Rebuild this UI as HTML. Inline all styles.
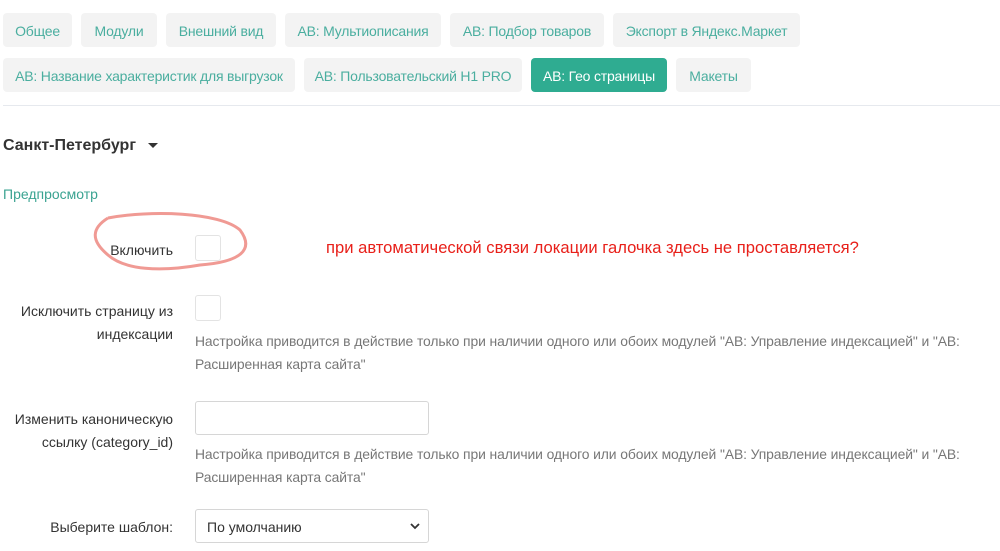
<!DOCTYPE html><html><head><meta charset="utf-8"><style>
body{margin:0;width:1000px;height:551px;background:#fff;font-family:"Liberation Sans","DejaVu Sans",sans-serif;position:relative;overflow:hidden}
.t{position:absolute;height:34px;line-height:36px;background:#f3f3f3;border-radius:4px;color:#4aae9f;font-size:14px;text-align:center;white-space:nowrap;letter-spacing:-0.2px}
.a{background:#2fac91;color:#fff}
.x{position:absolute;white-space:nowrap;font-size:14px;color:#333}
.r{text-align:right;right:827px}
.h{color:#777;left:195px;font-size:13.9px;letter-spacing:-0.1px}
.cb{position:absolute;left:195px;width:26px;height:26px;border:1px solid #e3e3e3;border-radius:3px;box-sizing:border-box}
.in{position:absolute;left:195px;width:234px;height:34px;border:1px solid #d6d6d6;border-radius:3px;box-sizing:border-box}
</style></head><body>
<div class="t" style="left:3px;top:13px;width:69px">Общее</div>
<div class="t" style="left:81px;top:13px;width:76px">Модули</div>
<div class="t" style="left:166px;top:13px;width:110px">Внешний вид</div>
<div class="t" style="left:285px;top:13px;width:156px">АВ: Мультиописания</div>
<div class="t" style="left:450px;top:13px;width:154px">АВ: Подбор товаров</div>
<div class="t" style="left:613px;top:13px;width:187px">Экспорт в Яндекс.Маркет</div>
<div class="t" style="left:3px;top:58px;width:292px">АВ: Название характеристик для выгрузок</div>
<div class="t" style="left:304px;top:58px;width:218px">АВ: Пользовательский H1 PRO</div>
<div class="t a" style="left:531px;top:58px;width:136px">АВ: Гео страницы</div>
<div class="t" style="left:676px;top:58px;width:75px">Макеты</div>
<div style="position:absolute;left:3px;right:0;top:105px;height:1px;background:#e6e9ee"></div>
<div class="x" style="left:3px;top:137px;font-size:16px;font-weight:bold;color:#333">Санкт-Петербург <span style="display:inline-block;margin-left:8px;vertical-align:middle;border-left:5px solid transparent;border-right:5px solid transparent;border-top:5px solid #333"></span></div>
<div class="x" style="left:3px;top:186px;color:#3aa391">Предпросмотр</div>
<svg style="position:absolute;left:90px;top:210px" width="165" height="66"><path d="M18 8 C60 0,130 2,150 20 C165 40,150 52,110 55 C70 62,35 60,18 45 C0 30,2 18,18 8" fill="none" stroke="#f09a94" stroke-width="3"/></svg>
<div class="x r" style="top:242px">Включить</div>
<div class="cb" style="top:235px"></div>
<div class="x" style="left:326px;top:238px;color:#e8201a;font-size:16.6px">при автоматической связи локации галочка здесь не проставляется?</div>
<div class="x r" style="top:303px">Исключить страницу из</div>
<div class="x r" style="top:326px">индексации</div>
<div class="cb" style="top:295px"></div>
<div class="x h" style="top:333px">Настройка приводится в действие только при наличии одного или обоих модулей "АВ: Управление индексацией" и "АВ:</div>
<div class="x h" style="top:356px">Расширенная карта сайта"</div>
<div class="x r" style="top:411px">Изменить каноническую</div>
<div class="x r" style="top:434px">ссылку (category_id)</div>
<div class="in" style="top:401px"></div>
<div class="x h" style="top:446px">Настройка приводится в действие только при наличии одного или обоих модулей "АВ: Управление индексацией" и "АВ:</div>
<div class="x h" style="top:469px">Расширенная карта сайта"</div>
<div class="x r" style="top:519px">Выберите шаблон:</div>
<div class="in" style="top:509px"><span class="x" style="left:11px;top:9px">По умолчанию</span><svg style="position:absolute;right:8px;top:12px" width="10" height="8"><path d="M1 2 L5 6 L9 2" fill="none" stroke="#333" stroke-width="1.8"/></svg></div>
</body></html>
